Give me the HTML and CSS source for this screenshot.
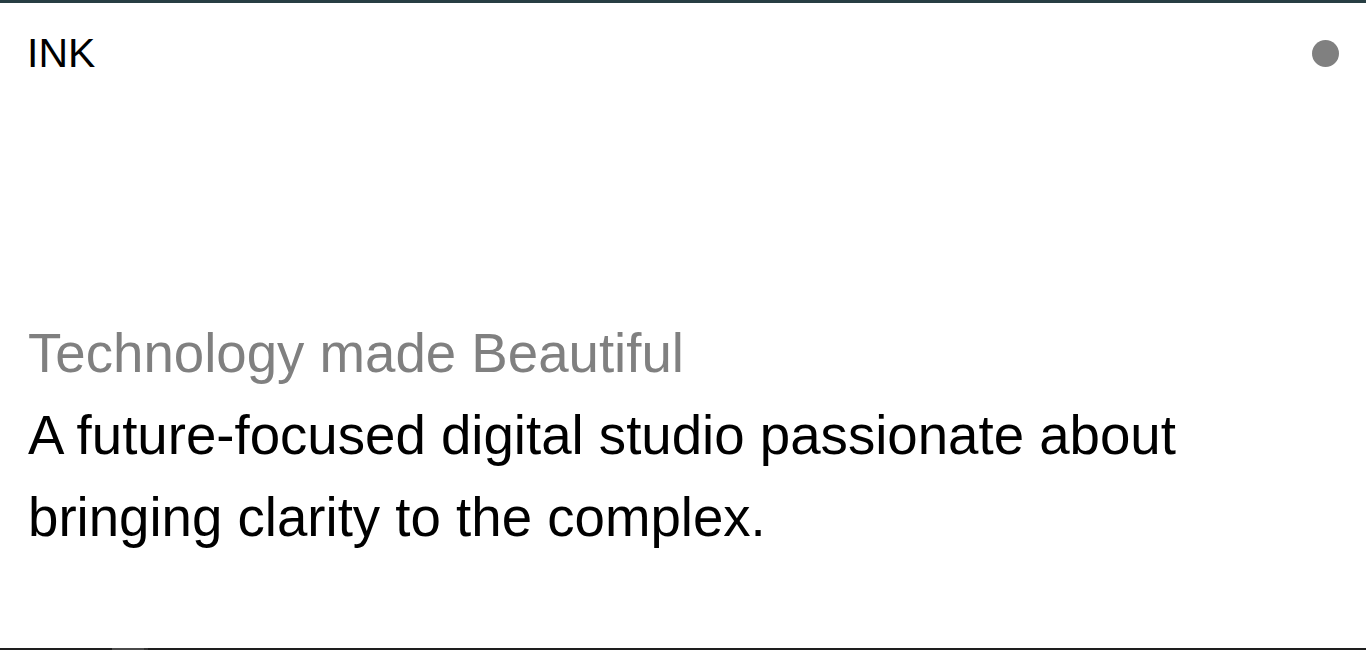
FILE: index.html
```html
<!DOCTYPE html>
<html lang="en">
<head>
<meta charset="utf-8">
<title>INK</title>
<link rel="stylesheet" href="styles.css">
</head>
<body>
<section class="hero">
  <header class="top">
    <div class="logo">INK</div>
    <span class="dot"></span>
  </header>
  <div class="intro">
    <p class="tagline">Technology made Beautiful</p>
    <p class="lead">A future-focused digital studio passionate about bringing clarity to the complex.</p>
  </div>
</section>
<section class="dark">
  <span class="marker"></span><span class="marker-edge"></span>
</section>
</body>
</html>
```
FILE: styles.css
```css
html, body {
  margin: 0;
  padding: 0;
}
body {
  font-family: "Liberation Sans", Arial, sans-serif;
  background: #ffffff;
  color: #000000;
  border-top: 3px solid #283e43;
}
.hero {
  height: 645px;
  box-sizing: border-box;
  display: flex;
  flex-direction: column;
  justify-content: space-between;
  padding: 28px 27px 89px 28px;
}
.top {
  display: flex;
  justify-content: space-between;
  align-items: center;
}
.logo {
  font-size: 3vw;
  line-height: 44px;
  margin-left: -1px;
}
.dot {
  width: 27px;
  height: 27px;
  border-radius: 50%;
  background: #808080;
}
.intro p {
  margin: 0;
  font-size: 4vw;
  line-height: 1.5;
}
.tagline {
  color: #808080;
}
.lead {
  color: #000000;
}
.dark {
  background: #1e1e1e;
  height: 60px;
  display: flex;
  align-items: flex-start;
  padding-left: 112px;
}
.marker {
  width: 32px;
  height: 60px;
  background: #4a4a4a;
}
.marker-edge {
  width: 4px;
  height: 60px;
  background: #333333;
}
```
